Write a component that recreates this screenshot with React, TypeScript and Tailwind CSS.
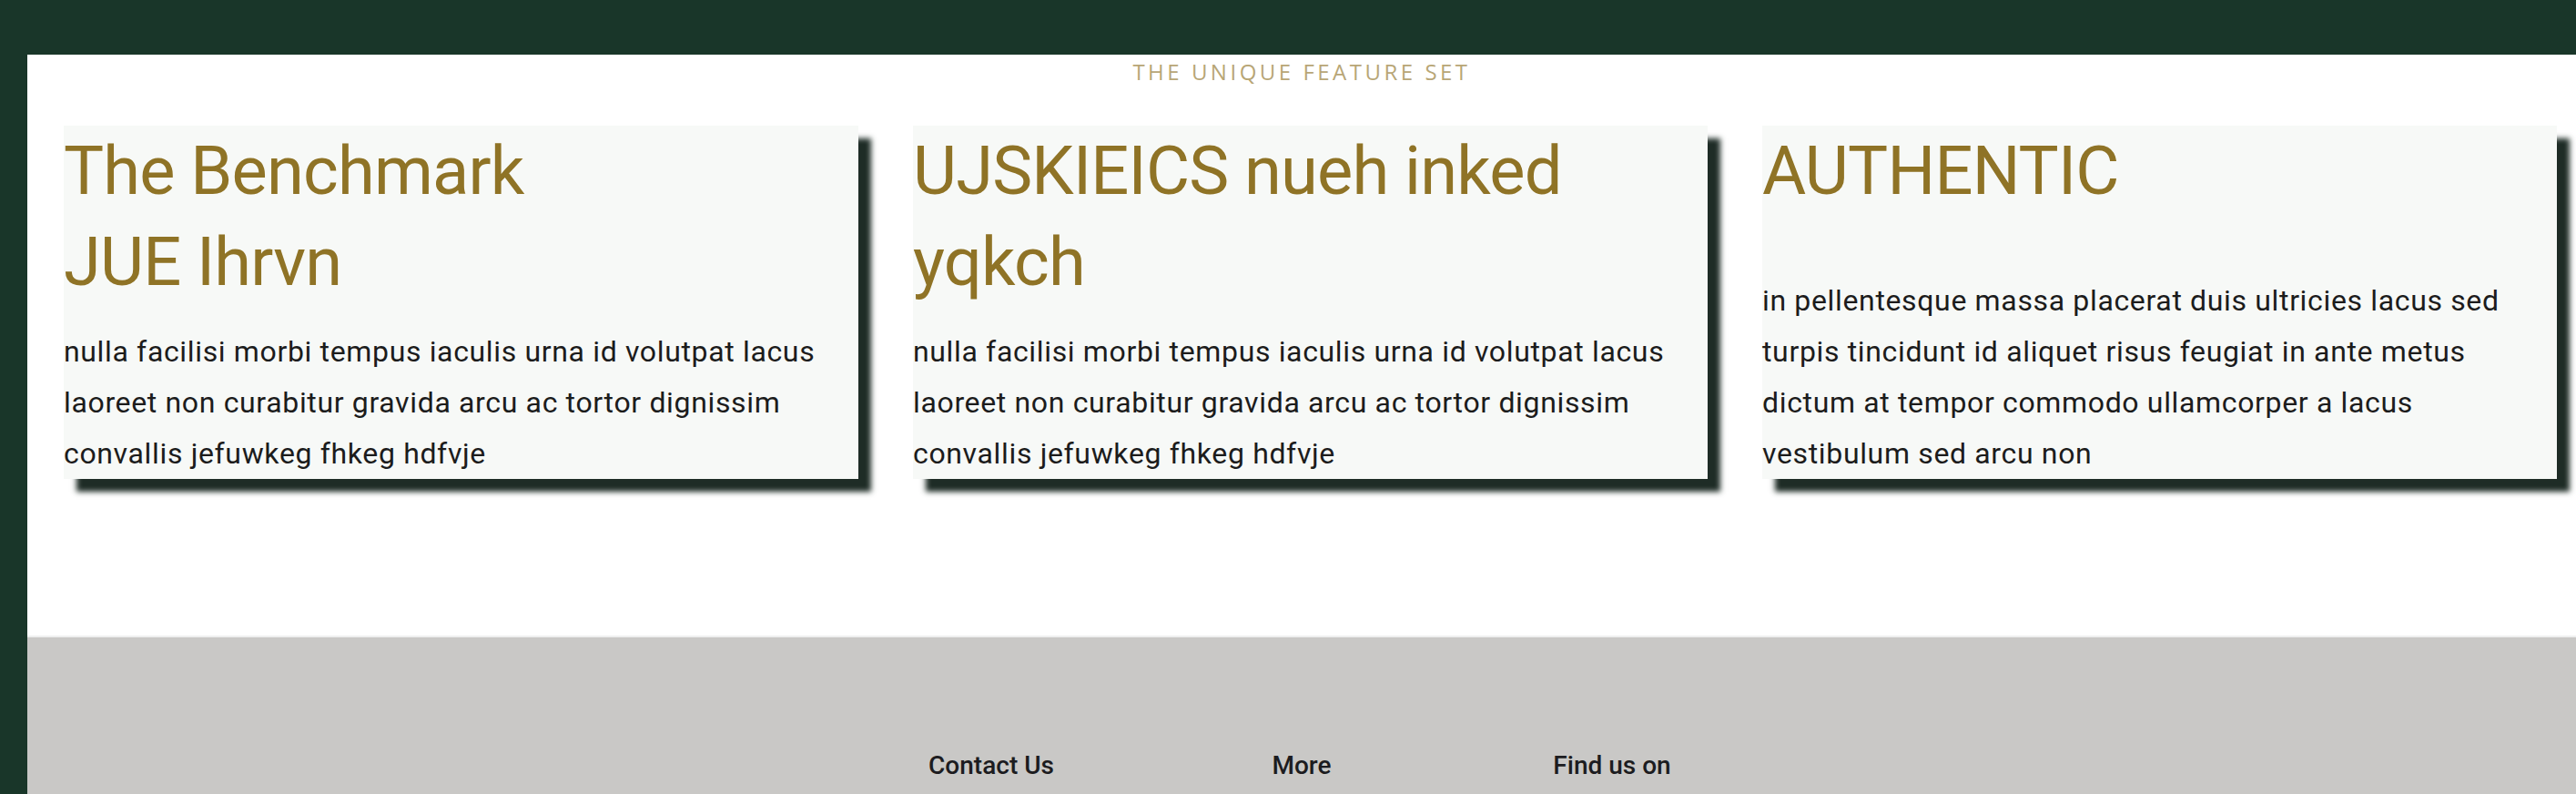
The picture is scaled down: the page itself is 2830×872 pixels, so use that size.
import React from "react";

const cards = [
  {
    title: (
      <>
        The Benchmark
        <br />
        JUE Ihrvn
      </>
    ),
    body: "nulla facilisi morbi tempus iaculis urna id volutpat lacus laoreet non curabitur gravida arcu ac tortor dignissim convallis jefuwkeg fhkeg hdfvje",
  },
  {
    title: <>UJSKIEICS nueh inked yqkch</>,
    body: "nulla facilisi morbi tempus iaculis urna id volutpat lacus laoreet non curabitur gravida arcu ac tortor dignissim convallis jefuwkeg fhkeg hdfvje",
  },
  {
    title: <>AUTHENTIC</>,
    body: "in pellentesque massa placerat duis ultricies lacus sed turpis tincidunt id aliquet risus feugiat in ante metus dictum at tempor commodo ullamcorper a lacus vestibulum sed arcu non",
  },
];

export default function App() {
  return (
    <div className="min-h-screen bg-[#193629] pt-[60px] pl-[30px] font-['Roboto',sans-serif]">
      <div className="bg-white">
        <p className="pt-[7px] text-center font-['Open_Sans',sans-serif] text-[24px] font-medium leading-[23px] tracking-[3.5px] text-[#b8a676]">
          THE UNIQUE FEATURE SET
        </p>
        <div className="mt-[48px] flex gap-[60px] pl-[40px] pr-[21px]">
          {cards.map((c, i) => (
            <div
              key={i}
              className="flex w-[873px] flex-col justify-between bg-[#f7f9f7] shadow-[14px_14px_6px_#1e2c26]"
            >
              <h2 className="text-[74px] font-normal leading-[100px] tracking-[-0.8px] text-[#8f7326]">
                {c.title}
              </h2>
              <p className="mt-[20px] text-[32px] leading-[56px] tracking-[0.65px] text-[#1c1c1c]">
                {c.body}
              </p>
            </div>
          ))}
        </div>
        <div className="h-[172px]" />
        <footer className="h-[320px] border-t-2 border-[#efefef] bg-[#c9c8c6] pt-[125px]">
          <div className="flex justify-center">
            {["Contact Us", "More", "Find us on"].map((t) => (
              <div
                key={t}
                className="w-[341px] text-center text-[28px] font-medium leading-[32px] text-[#1c1c20]"
              >
                {t}
              </div>
            ))}
          </div>
        </footer>
      </div>
    </div>
  );
}
